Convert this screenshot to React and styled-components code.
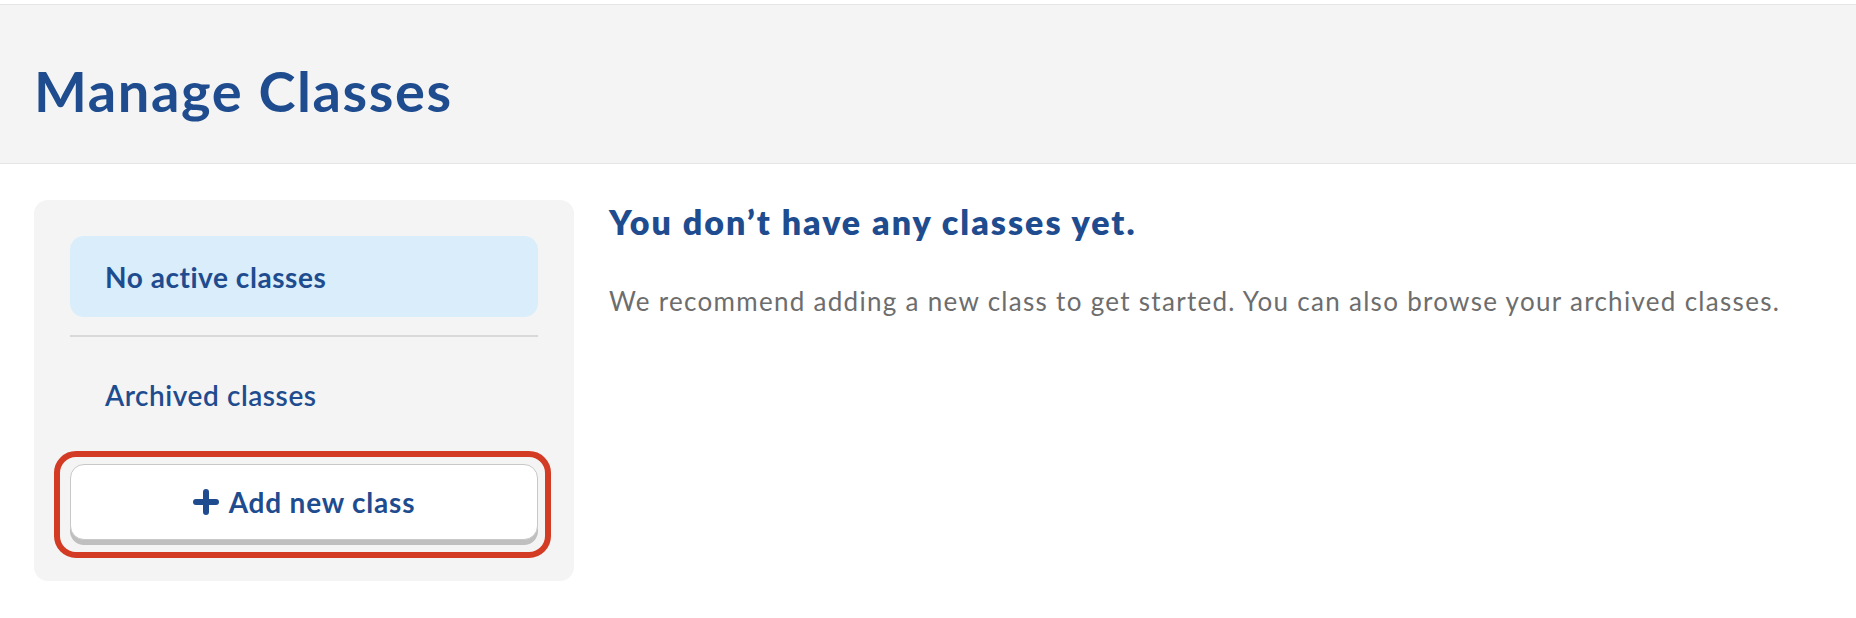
import React from "react";
import styled, { createGlobalStyle } from "styled-components";

const GlobalStyle = createGlobalStyle`
  html, body {
    margin: 0;
    padding: 0;
    background: #ffffff;
    font-family: Lato, "Noto Sans", sans-serif;
  }
`;

const Page = styled.div`
  width: 1856px;
  min-height: 618px;
  padding-top: 4px;
  box-sizing: border-box;
`;

const Header = styled.header`
  background: #f4f4f4;
  border-top: 1px solid #e6e6e6;
  border-bottom: 1px solid #e6e6e6;
  padding: 58px 0 44px 34px;
`;

const Title = styled.h1`
  margin: 0;
  font-size: 56px;
  line-height: 56px;
  font-weight: 700;
  letter-spacing: 1.6px;
  color: #1e4c8f;
`;

const Main = styled.main`
  display: flex;
  align-items: flex-start;
  padding: 36px 0 0 34px;
`;

const Sidebar = styled.nav`
  width: 540px;
  box-sizing: border-box;
  padding: 36px 36px 41px;
  background: #f4f4f4;
  border-radius: 14px;
  display: flex;
  flex-direction: column;
`;

const NavItem = styled.div`
  height: 81px;
  display: flex;
  align-items: center;
  padding-left: 35px;
  border-radius: 14px;
  background: ${(props) => (props.active ? "#d9edfb" : "transparent")};
  color: #1e4c8f;
  font-size: 28px;
  letter-spacing: 0.55px;
  font-weight: ${(props) => (props.active ? 700 : 600)};
  cursor: pointer;
`;

const Divider = styled.hr`
  margin: 18px 0 17px;
  border: none;
  height: 2px;
  background: #d8d8d8;
`;

// red highlight ring drawn over the sidebar around the button
const ButtonRing = styled.div`
  position: relative;
  margin-top: 29px;

  &::before {
    content: "";
    position: absolute;
    top: -13px;
    left: -16px;
    right: -13px;
    bottom: -18px;
    border: 6px solid #d33b24;
    border-radius: 22px;
    pointer-events: none;
  }
`;

const AddButton = styled.button`
  width: 100%;
  height: 76px;
  display: flex;
  align-items: center;
  justify-content: center;
  gap: 10px;
  background: #ffffff;
  border: 1px solid #c8c8c8;
  border-radius: 14px;
  box-shadow: 0 5px 0 #bfbfbf;
  color: #1e4c8f;
  font-family: inherit;
  font-size: 28px;
  font-weight: 700;
  letter-spacing: 0.8px;
  cursor: pointer;
`;

const Content = styled.section`
  margin-left: 35px;
  padding-top: 5px;
`;

const Heading = styled.h2`
  margin: 0;
  font-size: 34px;
  line-height: 34px;
  font-weight: 800;
  letter-spacing: 2px;
  color: #1e4c8f;
`;

const Text = styled.p`
  margin: 49px 0 0;
  font-size: 26px;
  line-height: 26px;
  letter-spacing: 1.3px;
  color: #6d6d6d;
`;

const PlusIcon = () => (
  <svg width="26" height="26" viewBox="0 0 26 26" fill="none">
    <path d="M13 3v20M3 13h20" stroke="#1e4c8f" strokeWidth="6" strokeLinecap="round" />
  </svg>
);

const App = () => {
  return (
    <Page>
      <GlobalStyle />
      <Header>
        <Title>Manage Classes</Title>
      </Header>
      <Main>
        <Sidebar>
          <NavItem active>No active classes</NavItem>
          <Divider />
          <NavItem>Archived classes</NavItem>
          <ButtonRing>
            <AddButton>
              <PlusIcon />
              Add new class
            </AddButton>
          </ButtonRing>
        </Sidebar>
        <Content>
          <Heading>You don’t have any classes yet.</Heading>
          <Text>
            We recommend adding a new class to get started. You can also browse your archived classes.
          </Text>
        </Content>
      </Main>
    </Page>
  );
};

export default App;
